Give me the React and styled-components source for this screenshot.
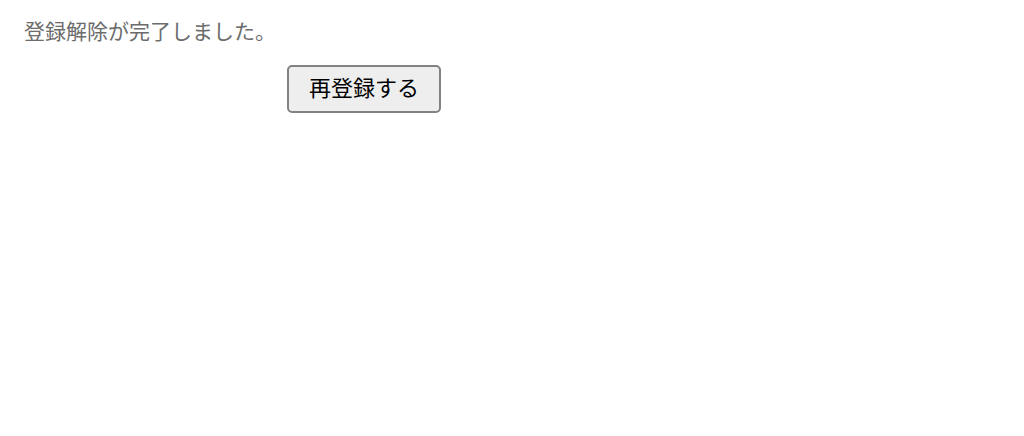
import React from "react";
import styled, { createGlobalStyle } from "styled-components";

function App() {
  return (
    <>
      <GlobalStyle />
      <Container>
        <Message>登録解除が完了しました。</Message>
        <Actions>
          <Button type="button">再登録する</Button>
        </Actions>
      </Container>
    </>
  );
}

export default App;

const GlobalStyle = createGlobalStyle`
  * {
    box-sizing: border-box;
  }

  body {
    margin: 0;
    background-color: #fff;
    font-family: "Liberation Sans", "Noto Sans CJK JP", sans-serif;
  }
`;

const Container = styled.main`
  max-width: 728px;
  padding: 16px 24px;
`;

const Message = styled.p`
  margin: 0 0 17px;
  color: #6c6c6c;
  font-size: 21px;
  line-height: 32px;
`;

const Actions = styled.div`
  display: flex;
  justify-content: center;
`;

const Button = styled.button`
  padding: 6px 20px;
  border: 2px solid #828282;
  border-radius: 5px;
  background-color: #eee;
  color: #000;
  font-family: inherit;
  font-size: 22px;
  line-height: 32px;
  cursor: pointer;
`;
